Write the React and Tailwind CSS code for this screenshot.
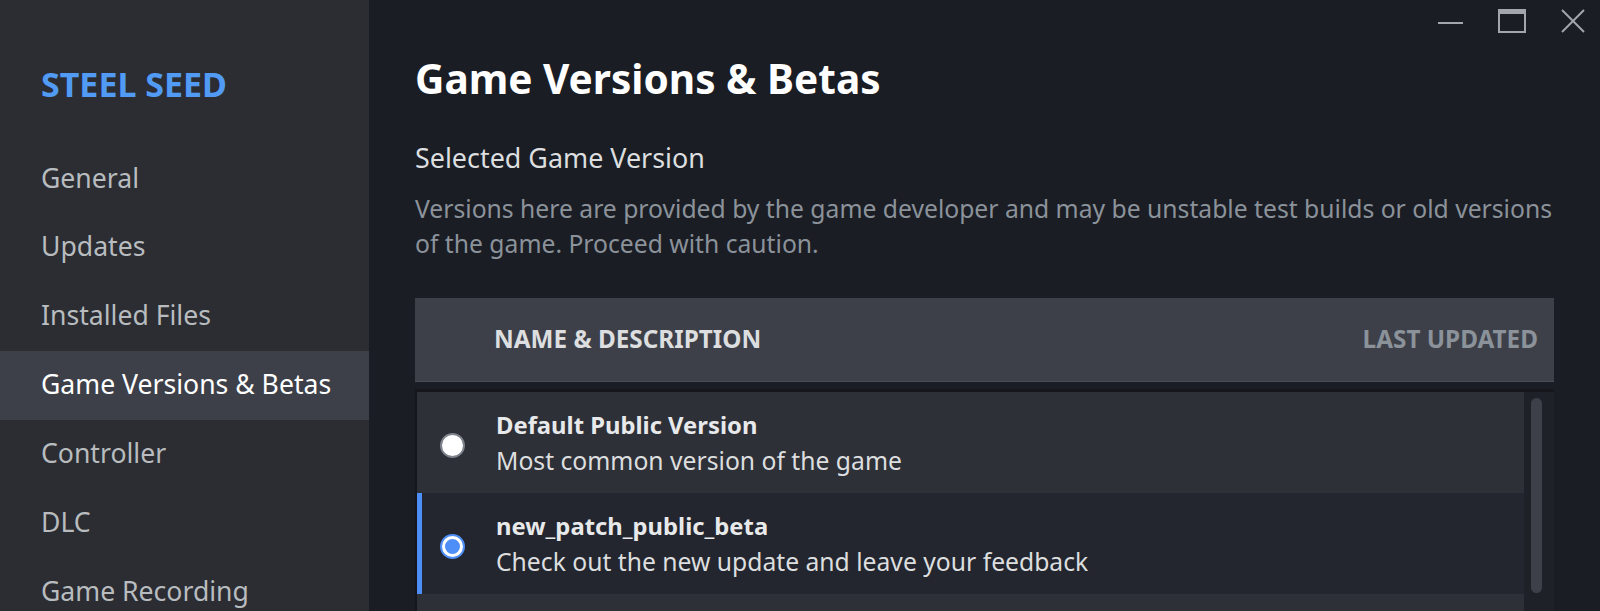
import React from 'react';

const navItems = [
    'General',
    'Updates',
    'Installed Files',
    'Game Versions & Betas',
    'Controller',
    'DLC',
    'Game Recording',
];

const versions = [
    { name: 'Default Public Version', desc: 'Most common version of the game', selected: false },
    { name: 'new_patch_public_beta', desc: 'Check out the new update and leave your feedback', selected: true },
    { name: '', desc: '', selected: false },
];

const Radio = ({ checked }) =>
    checked ? (
        <div className="w-[25px] h-[25px] mt-[6px] rounded-full bg-[#4d8ef7] p-[2px] shrink-0">
            <div className="w-full h-full rounded-full border-[3px] border-white bg-[#4d8ef7]" />
        </div>
    ) : (
        <div className="w-[25px] h-[25px] mt-[6px] rounded-full bg-white border-2 border-[#7d828b] shrink-0" />
    );

const App = () => {
    return (
        <div
            className="w-[1600px] h-[611px] overflow-hidden flex bg-[#1a1d24]"
            style={{ fontFamily: '"Noto Sans", "Open Sans", sans-serif' }}
        >
            {/* Sidebar */}
            <div className="w-[369px] shrink-0 bg-[#2b2d33] flex flex-col">
                <div className="pl-[41px] pt-[63px] h-[144px] shrink-0 text-[34px] leading-[42px] font-bold text-[#529bf4]">
                    STEEL SEED
                </div>
                {navItems.map((item) => {
                    const active = item === 'Game Versions & Betas';
                    return (
                        <div
                            key={item}
                            className={
                                'h-[68.9px] shrink-0 flex items-center pl-[41px] text-[26.6px] ' +
                                (active ? 'bg-[#3d4049] text-white' : 'text-[#b8bcbf]')
                            }
                        >
                            {item}
                        </div>
                    );
                })}
            </div>

            {/* Main */}
            <div className="flex-1 relative px-[46px]">
                {/* Window controls */}
                <svg
                    width="170"
                    height="42"
                    viewBox="0 0 170 42"
                    className="absolute top-0 right-0 text-[#a3a7ad]"
                >
                    <line x1="8" y1="23" x2="33" y2="23" stroke="currentColor" strokeWidth="2" />
                    <rect x="69" y="10" width="26" height="22" fill="none" stroke="currentColor" strokeWidth="2" />
                    <rect x="69" y="10" width="26" height="4" fill="currentColor" />
                    <line x1="132" y1="10" x2="154" y2="32" stroke="currentColor" strokeWidth="2" />
                    <line x1="154" y1="10" x2="132" y2="32" stroke="currentColor" strokeWidth="2" />
                </svg>

                <h1 className="pt-[55px] text-[40.6px] leading-[48px] font-bold text-white">
                    Game Versions &amp; Betas
                </h1>

                <div className="mt-[38px] text-[26.9px] leading-[34px] text-[#dcdedf]">Selected Game Version</div>

                <p className="mt-[16px] text-[24.7px] leading-[35px] text-[#8b929a]">
                    Versions here are provided by the game developer and may be unstable test builds or old versions
                    of the game. Proceed with caution.
                </p>

                {/* Table header */}
                <div className="mt-[37px] h-[84px] bg-[#3d4049] border-b border-[#4a4d56] flex items-center justify-between pl-[79px] pr-[16px] text-[24.3px] font-bold">
                    <span className="text-[#dcdedf]">NAME &amp; DESCRIPTION</span>
                    <span className="text-[#8b929a]">LAST UPDATED</span>
                </div>

                {/* List */}
                <div className="mt-[7px] border-t-[3px] border-l-2 border-[#15171c] flex">
                    <div className="flex-1 flex flex-col">
                        {versions.map((v, i) => (
                            <div
                                key={i}
                                className={
                                    'h-[101px] shrink-0 flex items-center gap-[31px] pl-[23px] relative ' +
                                    (v.selected ? 'bg-[#23262e]' : 'bg-[#2e3038]')
                                }
                            >
                                {v.selected && <div className="absolute left-0 top-0 bottom-0 w-[5px] bg-[#4d8ef7]" />}
                                {v.name && <Radio checked={v.selected} />}
                                {v.name && (
                                    <div className="flex flex-col leading-[35px]">
                                        <span className="font-bold text-[23.8px] text-[#e8e9ea]">{v.name}</span>
                                        <span className="text-[24.7px] text-[#dcdedf]">{v.desc}</span>
                                    </div>
                                )}
                            </div>
                        ))}
                    </div>
                    <div className="w-[30px] shrink-0 bg-[#1e2128] pt-[6px] pl-[7px]">
                        <div className="w-[11px] h-[195px] rounded-full bg-[#3d4049]" />
                    </div>
                </div>
            </div>
        </div>
    );
};

export default App;
